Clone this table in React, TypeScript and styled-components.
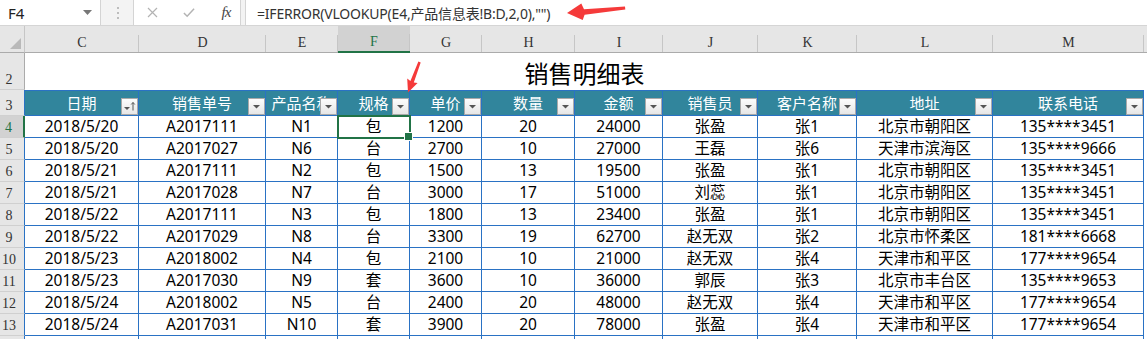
import styled, { createGlobalStyle } from "styled-components";

const GlobalStyle = createGlobalStyle`
  html, body {
    margin: 0;
    padding: 0;
    background: #ffffff;
    overflow: hidden;
  }
  * {
    box-sizing: border-box;
  }
`;

const BLUE = "#2a72c4";
const GREEN = "#217346";
const TEAL = "#31859c";
const SANS = `"Noto Sans", "Noto Sans CJK SC", sans-serif`;
const HEADING = `"Liberation Serif", "DejaVu Serif", serif`;

const Window = styled.div`
  position: relative;
  width: 1147px;
  height: 339px;
  overflow: hidden;
  font-family: ${SANS};
  background: #ffffff;
`;

/* ---------- formula bar ---------- */

const FormulaBar = styled.div`
  display: flex;
  height: 26px;
  background: #f3f3f3;
  border-bottom: 1px solid #d5d5d5;
`;

const NameBox = styled.div`
  width: 101px;
  display: flex;
  align-items: center;
  justify-content: space-between;
  padding: 0 8px 0 8px;
  background: #ffffff;
  border-right: 1px solid #d4d4d4;
  font-size: 15px;
  color: #222;
`;

const Grip = styled.div`
  width: 32px;
  display: flex;
  align-items: center;
  justify-content: center;
`;

const FxGroup = styled.div`
  width: 108px;
  display: flex;
  align-items: center;
  gap: 25px;
  padding-left: 12px;
  background: #ffffff;
  border-left: 1px solid #d4d4d4;
  border-right: 1px solid #d4d4d4;
`;

const FxIcon = styled.span`
  width: 12px;
  display: flex;
  justify-content: center;
  font-family: ${HEADING};
  font-style: italic;
  font-size: 15px;
  color: #444;
  letter-spacing: -1px;
`;

const FormulaInput = styled.div`
  flex: 1;
  margin-left: 4px;
  display: flex;
  align-items: center;
  padding-left: 11px;
  background: #ffffff;
  border-left: 1px solid #d4d4d4;
  font-size: 14px;
  letter-spacing: -0.2px;
  color: #333;
  white-space: nowrap;
`;

/* ---------- sheet ---------- */

const Sheet = styled.div`
  display: grid;
  grid-template-columns: 25px 114px 127px 72px 72px 72px 93px 88px 95px 99px 136px 151px 1fr;
  grid-template-rows: 27px 37px 26px repeat(11, 22px);
`;

const Corner = styled.div`
  display: flex;
  align-items: flex-end;
  justify-content: flex-end;
  padding: 0 3px 3px 0;
  background: #e6e6e6;
  border-right: 1px solid #c6c6c6;
  border-bottom: 1px solid #ababab;
`;

const ColHead = styled.div<{ $active?: boolean }>`
  display: flex;
  align-items: flex-end;
  justify-content: center;
  padding-bottom: 2px;
  background: linear-gradient(#c6c6c6, #c6c6c6) right bottom / 1px 17px no-repeat,
    ${(p) => (p.$active ? "#d2d2d2" : "#e6e6e6")};
  border-bottom: ${(p) => (p.$active ? `2px solid ${GREEN}` : "1px solid #ababab")};
  font-family: ${HEADING};
  font-size: 14px;
  line-height: 1;
  color: ${(p) => (p.$active ? GREEN : "#333")};
`;

const RowHead = styled.div<{ $active?: boolean; $table?: boolean }>`
  display: flex;
  align-items: flex-end;
  justify-content: center;
  padding: 0 6px 2px 0;
  background: ${(p) => (p.$active ? "#d2d2d2" : "#e6e6e6")};
  border-bottom: 1px solid #d0d0d0;
  border-right: ${(p) =>
    p.$active ? `2px solid ${GREEN}` : p.$table ? `1px solid ${BLUE}` : "1px solid #ababab"};
  font-family: ${HEADING};
  font-size: 14px;
  line-height: 1;
  color: ${(p) => (p.$active ? GREEN : "#333")};
`;

const Title = styled.div`
  grid-column: span 11;
  display: flex;
  align-items: center;
  justify-content: center;
  padding-top: 1px;
  font-size: 24px;
  color: #000;
`;

const Blank = styled.div<{ $head?: boolean }>`
  background: ${(p) => (p.$head ? "#e6e6e6" : "#ffffff")};
  border-bottom: ${(p) => (p.$head ? "1px solid #ababab" : "none")};
`;

const HeadCell = styled.div`
  display: grid;
  background: ${TEAL};
  border-top: 1px solid ${BLUE};
  border-right: 1px solid ${BLUE};
  border-bottom: 1px solid ${BLUE};
  color: #ffffff;
  font-size: 15px;
  overflow: hidden;
`;

const HeadLabel = styled.span`
  grid-area: 1 / 1;
  align-self: center;
  justify-self: center;
  white-space: nowrap;
  line-height: 1;
`;

const FilterButton = styled.span`
  grid-area: 1 / 1;
  justify-self: end;
  align-self: end;
  width: 17px;
  height: 17px;
  display: flex;
  align-items: center;
  justify-content: center;
  background: linear-gradient(#fdfdfd, #e6e6e6);
  border: 1px solid #a9a9a9;
`;

const Cell = styled.div<{ $selected?: boolean }>`
  position: relative;
  display: flex;
  align-items: center;
  justify-content: center;
  border-right: 1px solid ${BLUE};
  border-bottom: 1px solid ${BLUE};
  font-size: 15.5px;
  line-height: 1;
  color: #000;
  white-space: nowrap;
  ${(p) =>
    p.$selected &&
    `
    z-index: 1;
    outline: 2px solid ${GREEN};
    outline-offset: -1px;
    &::after {
      content: "";
      position: absolute;
      right: -4px;
      bottom: -4px;
      width: 7px;
      height: 7px;
      background: ${GREEN};
      border: 1px solid #ffffff;
    }
  `}
`;

const Annotation = styled.svg`
  position: absolute;
  left: 0;
  top: 0;
  pointer-events: none;
`;

const headers = [
  "日期",
  "销售单号",
  "产品名称",
  "规格",
  "单价",
  "数量",
  "金额",
  "销售员",
  "客户名称",
  "地址",
  "联系电话",
];

const letters = ["C", "D", "E", "F", "G", "H", "I", "J", "K", "L", "M"];

const rows: string[][] = [
  ["2018/5/20", "A2017111", "N1", "包", "1200", "20", "24000", "张盈", "张1", "北京市朝阳区", "135****3451"],
  ["2018/5/20", "A2017027", "N6", "台", "2700", "10", "27000", "王磊", "张6", "天津市滨海区", "135****9666"],
  ["2018/5/21", "A2017111", "N2", "包", "1500", "13", "19500", "张盈", "张1", "北京市朝阳区", "135****3451"],
  ["2018/5/21", "A2017028", "N7", "台", "3000", "17", "51000", "刘蕊", "张1", "北京市朝阳区", "135****3451"],
  ["2018/5/22", "A2017111", "N3", "包", "1800", "13", "23400", "张盈", "张1", "北京市朝阳区", "135****3451"],
  ["2018/5/22", "A2017029", "N8", "台", "3300", "19", "62700", "赵无双", "张2", "北京市怀柔区", "181****6668"],
  ["2018/5/23", "A2018002", "N4", "包", "2100", "10", "21000", "赵无双", "张4", "天津市和平区", "177****9654"],
  ["2018/5/23", "A2017030", "N9", "套", "3600", "10", "36000", "郭辰", "张3", "北京市丰台区", "135****9653"],
  ["2018/5/24", "A2018002", "N5", "台", "2400", "20", "48000", "赵无双", "张4", "天津市和平区", "177****9654"],
  ["2018/5/24", "A2017031", "N10", "套", "3900", "20", "78000", "张盈", "张4", "天津市和平区", "177****9654"],
];

const DropArrow = () => (
  <svg width="15" height="15" viewBox="0 0 15 15">
    <polygon points="4,6 11,6 7.5,9.5" fill="#555" />
  </svg>
);

const SortArrow = () => (
  <svg width="15" height="15" viewBox="0 0 15 15">
    <polygon points="2,8 8,8 5,11" fill="#555" />
    <path d="M11 3.5 V11.5 M9.2 5.5 L11 3.5 L12.8 5.5" stroke="#555" strokeWidth="1" fill="none" />
  </svg>
);

const Row = ({ index, values }: { index: number; values: string[] }) => (
  <>
    <RowHead $table $active={index === 4}>
      {index}
    </RowHead>
    {values.map((v, i) => (
      <Cell key={i} $selected={index === 4 && i === 3}>
        {v}
      </Cell>
    ))}
    <Blank />
  </>
);

const App = () => {
  return (
    <>
      <GlobalStyle />
      <Window>
        <FormulaBar>
          <NameBox>
            <span>F4</span>
            <svg width="9" height="5" viewBox="0 0 9 5">
              <polygon points="0,0 9,0 4.5,5" fill="#777" />
            </svg>
          </NameBox>
          <Grip>
            <svg width="3" height="13" viewBox="0 0 3 13">
              <rect x="1" y="1" width="2" height="2" fill="#bdbdbd" />
              <rect x="1" y="6" width="2" height="2" fill="#bdbdbd" />
              <rect x="1" y="11" width="2" height="2" fill="#bdbdbd" />
            </svg>
          </Grip>
          <FxGroup>
            <FxIcon>
              <svg width="11" height="11" viewBox="0 0 11 11">
                <path d="M1 1 L10 10 M10 1 L1 10" stroke="#b3b3b3" strokeWidth="1.2" />
              </svg>
            </FxIcon>
            <FxIcon>
              <svg width="13" height="11" viewBox="0 0 13 11">
                <path d="M1 6 L4.5 9.5 L12 1.5" stroke="#b3b3b3" strokeWidth="1.6" fill="none" />
              </svg>
            </FxIcon>
            <FxIcon>fx</FxIcon>
          </FxGroup>
          <FormulaInput>=IFERROR(VLOOKUP(E4,产品信息表!B:D,2,0),"")</FormulaInput>
        </FormulaBar>

        <Sheet>
          <Corner>
            <svg width="11" height="11" viewBox="0 0 11 11">
              <polygon points="11,0 11,11 0,11" fill="#b9b9b9" />
            </svg>
          </Corner>
          {letters.map((l) => (
            <ColHead key={l} $active={l === "F"}>
              {l}
            </ColHead>
          ))}
          <Blank $head />

          <RowHead>2</RowHead>
          <Title>销售明细表</Title>
          <Blank />

          <RowHead $table>3</RowHead>
          {headers.map((h, i) => (
            <HeadCell key={h}>
              <HeadLabel>{h}</HeadLabel>
              <FilterButton>{i === 0 ? <SortArrow /> : <DropArrow />}</FilterButton>
            </HeadCell>
          ))}
          <Blank />

          {rows.map((r, ri) => (
            <Row key={ri} index={ri + 4} values={r} />
          ))}

          <RowHead $table />
          {letters.map((l) => (
            <Cell key={l} />
          ))}
          <Blank />
        </Sheet>

        <Annotation width="1147" height="339" viewBox="0 0 1147 339">
          <polygon
            points="567,13 581.3,3.5 584,9.3 625,6.4 625.3,9.4 584.6,14.8 582.7,20"
            fill="#f53a3a"
          />
          <polygon
            points="408,92.5 407.2,78.6 410.4,81 418.4,61.4 420.7,62.4 413.8,82.6 417.6,82.9"
            fill="#f53a3a"
          />
        </Annotation>
      </Window>
    </>
  );
};

export default App;
